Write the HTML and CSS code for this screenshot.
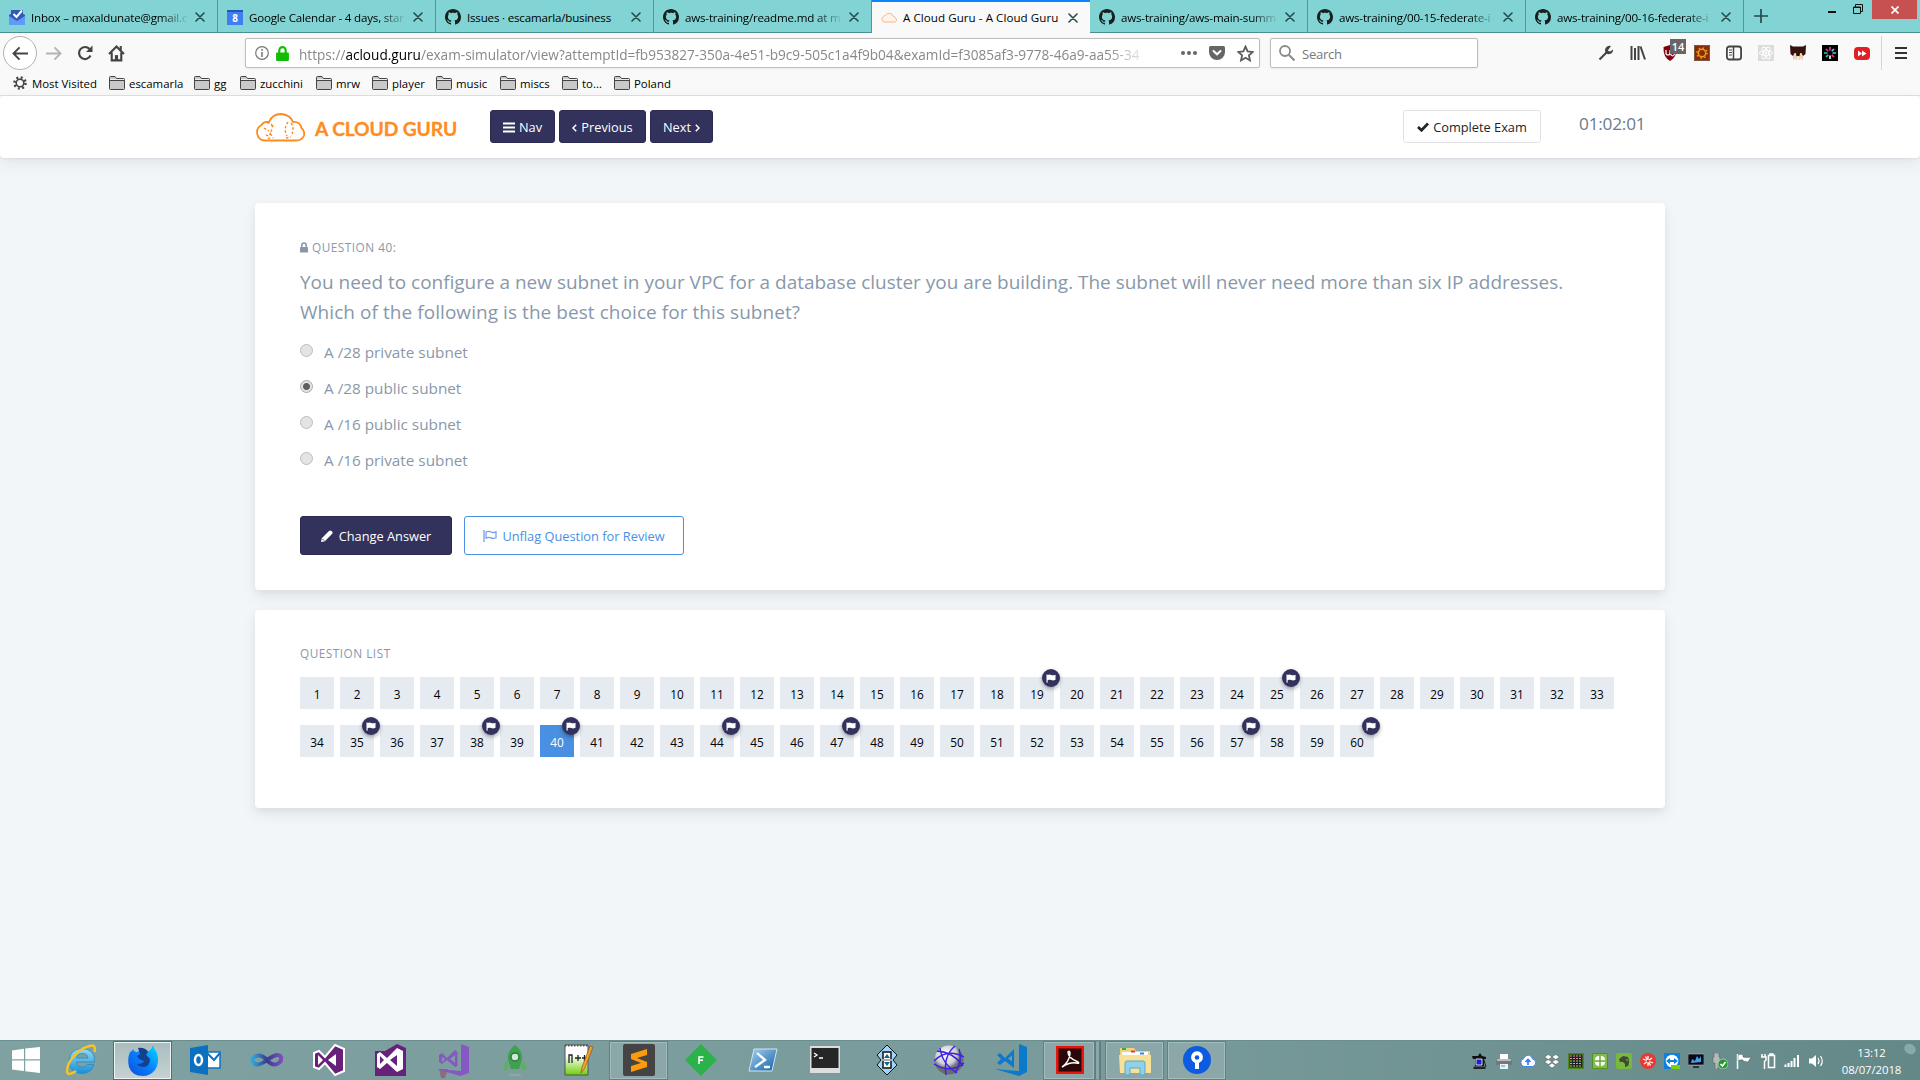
FILE: index.html
```html
<!DOCTYPE html>
<html lang="en">
<head>
<meta charset="utf-8">
<title>A Cloud Guru - A Cloud Guru</title>
<link rel="stylesheet" href="styles.css">
</head>
<body>
<svg class="defs" width="0" height="0">
  <defs>
    <symbol id="github" viewBox="0 0 16 16"><path fill="#15201f" d="M8 0C3.58 0 0 3.58 0 8c0 3.54 2.29 6.53 5.47 7.59.4.07.55-.17.55-.38 0-.19-.01-.82-.01-1.49-2.01.37-2.53-.49-2.69-.94-.09-.23-.48-.94-.82-1.13-.28-.15-.68-.52-.01-.53.63-.01 1.08.58 1.23.82.72 1.21 1.87.87 2.33.66.07-.52.28-.87.51-1.07-1.78-.2-3.64-.89-3.64-3.95 0-.87.31-1.59.82-2.15-.08-.2-.36-1.02.08-2.12 0 0 .67-.21 2.2.82.64-.18 1.32-.27 2-.27.68 0 1.36.09 2 .27 1.53-1.04 2.2-.82 2.2-.82.44 1.1.16 1.92.08 2.12.51.56.82 1.27.82 2.15 0 3.07-1.87 3.75-3.65 3.95.29.25.54.73.54 1.48 0 1.07-.01 1.93-.01 2.2 0 .21.15.46.55.38A8.013 8.013 0 0016 8c0-4.42-3.58-8-8-8z"/></symbol>
    <symbol id="close" viewBox="0 0 10 10"><path d="M1 1l8 8M9 1l-8 8" stroke="#234b4b" stroke-width="1.6" stroke-linecap="round"/></symbol>
    <symbol id="folder" viewBox="0 0 16 14"><path d="M.5 12.500V1.500q0-1 1-1h4.500l1.500 2h7q1 0 1 1v9q0 1-1 1h-13q-1 0-1-1z" fill="#c9c9c9" stroke="#444"/><path d="M1 4.500h14" stroke="#444"/><path d="M1 3.500h14" stroke="#eee"/></symbol>
    <symbol id="flag" viewBox="0 0 10 10"><path fill="#fff" d="M.5 1.500h1v.500q2-1 3.800 0 1.700.800 4.200-.300v5q-2.300 1.200-4.200.400-1.900-.900-3.600 0V9.500h-1.200z"/></symbol>
    <linearGradient id="gIe" x2="0" y2="1"><stop stop-color="#8fdcfb"/><stop offset="1" stop-color="#1a8fd8"/></linearGradient>
    <linearGradient id="gFx" x1="1" x2="0" y2="1"><stop stop-color="#00e1ff"/><stop offset=".5" stop-color="#0a7fff"/><stop offset="1" stop-color="#0a4fd8"/></linearGradient>
    <linearGradient id="gInf" x2="1"><stop stop-color="#2fa8d8"/><stop offset=".5" stop-color="#3a3a90"/><stop offset="1" stop-color="#7a4fb8"/></linearGradient>
    <linearGradient id="gNpp" x2="0" y2="1"><stop offset=".35" stop-color="#fff"/><stop offset="1" stop-color="#6fce0a"/></linearGradient>
    <linearGradient id="gPs" x2="1" y2="1"><stop stop-color="#a8d0ee"/><stop offset="1" stop-color="#0f63a8"/></linearGradient>
    <radialGradient id="gBall" cx=".4" cy=".3"><stop stop-color="#fff"/><stop offset=".7" stop-color="#cfcfd4"/><stop offset="1" stop-color="#6a6a70"/></radialGradient>
  </defs>
</svg>

<header class="browser">
  <div class="tabs">
    <div class="tab"><svg class="fav" viewBox="0 0 16 16"><path d="M0 6l8-5 8 5v10H0z" fill="#2b59c9"/><path d="M2 1h12v9l-6 3-6-3z" fill="#3358b8"/><path d="M4.500 5l3 3L13 1.500" fill="none" stroke="#fff" stroke-width="2"/><path d="M0 7l8 5 8-5v9H0z" fill="#5f9cf8"/></svg><span class="title fade">Inbox – maxaldunate@gmail.c</span><svg class="x"><use href="#close"/></svg></div>
    <div class="tab"><svg class="fav" viewBox="0 0 16 16"><path d="M0 1h16v15H0z" fill="#3f7df0"/><path d="M0 1h16v2H0z" fill="#2456b8"/><text x="8" y="12.500" text-anchor="middle" font-size="10" font-weight="700" fill="#fff">8</text></svg><span class="title fade">Google Calendar - 4 days, star</span><svg class="x"><use href="#close"/></svg></div>
    <div class="tab"><svg class="fav"><use href="#github"/></svg><span class="title">Issues · escamarla/business</span><svg class="x"><use href="#close"/></svg></div>
    <div class="tab"><svg class="fav"><use href="#github"/></svg><span class="title fade">aws-training/readme.md at m</span><svg class="x"><use href="#close"/></svg></div>
    <div class="tab active"><svg class="fav" viewBox="0 -9 50 50"><path d="M10 28.500A9 9 0 0 1 7.500 12Q9 7.500 14 8.500 18 1 26 1.500q9 .500 11.500 8.500 6 0 7.500 6 4.500 3 3.500 7.500-1.500 5-7 5z" fill="#fff4ea" stroke="#ffb080" stroke-width="3"/></svg><span class="title">A Cloud Guru - A Cloud Guru</span><svg class="x"><use href="#close"/></svg></div>
    <div class="tab"><svg class="fav"><use href="#github"/></svg><span class="title fade">aws-training/aws-main-summ</span><svg class="x"><use href="#close"/></svg></div>
    <div class="tab"><svg class="fav"><use href="#github"/></svg><span class="title fade">aws-training/00-15-federate-i</span><svg class="x"><use href="#close"/></svg></div>
    <div class="tab"><svg class="fav"><use href="#github"/></svg><span class="title fade">aws-training/00-16-federate-i</span><svg class="x"><use href="#close"/></svg></div>
    <svg class="plus" viewBox="0 0 14 14"><path d="M7 0v14M0 7h14" stroke="#234b4b" stroke-width="1.700"/></svg>
    <div class="winbtns">
      <svg class="min" viewBox="0 0 8 2"><path d="M0 1h8" stroke="#111" stroke-width="2"/></svg>
      <svg class="rest" viewBox="0 0 10 10"><path d="M.5 3h7v6.500h-7zM.5 3.500h7M2.500 3V.5h7v7H8" fill="none" stroke="#111"/></svg>
      <div class="winclose"><svg viewBox="0 0 8 8"><path d="M.5.5l7 7M7.500.5l-7 7" stroke="#fff" stroke-width="1.700"/></svg></div>
    </div>
  </div>

  <div class="toolbar">
    <div class="back"><svg viewBox="0 0 18 16"><path d="M17 8H2M8 1.500L1.500 8 8 14.500" fill="none" stroke="#444" stroke-width="2"/></svg></div>
    <svg class="fwd" viewBox="0 0 18 16"><path d="M1 8h15M10 1.500L16.500 8 10 14.500" fill="none" stroke="#b4b4b4" stroke-width="2"/></svg>
    <svg class="reload" viewBox="0 0 16 16"><path d="M13.500 10.500A6 6 0 1 1 12.500 4" fill="none" stroke="#444" stroke-width="2.200"/><path d="M15.500.5v6.500H9z" fill="#444"/></svg>
    <svg class="home" viewBox="0 0 16 16"><path d="M1 8.500L8 1.500l7 7M3.500 7v7.500h9V7" fill="none" stroke="#444" stroke-width="2"/><path d="M6.500 15V9.500h3V15" fill="#444"/><path d="M11 1h2v4h-2z" fill="#444"/></svg>
    <div class="url">
      <svg class="info" viewBox="0 0 14 14"><circle cx="7" cy="7" r="6.300" fill="none" stroke="#777" stroke-width="1.200"/><path d="M7 6v5M7 3v1.700" stroke="#777" stroke-width="1.500"/></svg>
      <svg class="lock" viewBox="0 0 12 14"><path d="M3 7V4.200a3 3.200 0 0 1 6 0V7" fill="none" stroke="#12bc00" stroke-width="2"/><rect y="6" width="12" height="8" rx="1" fill="#12bc00"/></svg>
      <span class="addr">https://<b>acloud.guru</b>/exam-simulator/view?attemptId=fb953827-350a-4e51-b9c9-505c1a4f9b04&amp;examId=f3085af3-9778-46a9-aa55-34</span>
      <svg class="dots" viewBox="0 0 16 4"><circle cx="2" cy="2" r="2"/><circle cx="8" cy="2" r="2"/><circle cx="14" cy="2" r="2"/></svg>
      <svg class="pocket" viewBox="0 0 16 14"><path d="M1.500 0h13Q16 0 16 1.500V6a8 8 0 0 1-16 0V1.500Q0 0 1.500 0z" fill="#666"/><path d="M4.500 5L8 8.300 11.500 5" fill="none" stroke="#fff" stroke-width="2" stroke-linecap="round"/></svg>
      <svg class="star" viewBox="0 0 16 16"><path d="M8 1.500l2 4.500 4.800.500-3.600 3.200 1 4.800L8 12l-4.200 2.500 1-4.800L1.200 6.500 6 6z" fill="none" stroke="#5a5a5a" stroke-width="1.700"/></svg>
    </div>
    <div class="search"><svg viewBox="0 0 16 16"><circle cx="6" cy="6" r="5" fill="none" stroke="#888" stroke-width="1.800"/><path d="M10 10l5.500 5.500" stroke="#888" stroke-width="2"/></svg><span>Search</span></div>
    <div class="exts">
      <svg viewBox="0 0 16 16"><path d="M1.500 14.500L9 7" stroke="#444" stroke-width="2.200"/><path d="M13 1A4.500 4.500 0 0 0 7 5.500q.3 3.500 4 3.700 3.700-.2 4.300-4.700l-3.300 2L9.800 5.500z" fill="#444"/></svg>
      <svg viewBox="0 0 16 16"><path d="M1.500 1v14M5 3v12M8.500 1v14M10.500 1.500L15 14.500" stroke="#444" stroke-width="2"/></svg>
      <div class="ub"><svg viewBox="0 0 16 16"><path d="M8 0l6.500 2Q15 12 8 16 1 12 1.500 2z" fill="#800010"/><path d="M4 5v3q0 2 2 2t2-2V5M10.500 7.500a1.700 1.700 0 1 0 .1 0" fill="none" stroke="#fff" stroke-width="1.200"/></svg><span>14</span></div>
      <svg viewBox="0 0 16 16"><path d="M0 0h16v16H0z" fill="#8c2a08"/><path d="M.5.5h15v15H.5z" fill="none" stroke="#7c5a45"/><circle cx="8" cy="8" r="5" fill="none" stroke="#dfa017" stroke-width="1.800" stroke-dasharray="1.400 2.527"/><circle cx="8" cy="8" r="3.700" fill="none" stroke="#dfa017" stroke-width="1.500"/></svg>
      <svg viewBox="0 0 16 16"><rect x=".9" y="1.500" width="14.200" height="13" rx="2.500" fill="none" stroke="#444" stroke-width="1.800"/><path d="M7.500 2v12" stroke="#444" stroke-width="1.500"/><path d="M3 5h3M3 7.500h3M3 10h3" stroke="#444"/></svg>
      <svg viewBox="0 0 16 16"><path d="M0 0h16v16H0z" fill="#dcdcdc"/><g fill="none" stroke="#fff"><ellipse cx="8" cy="8" rx="6.500" ry="2.600"/><ellipse cx="8" cy="8" rx="6.500" ry="2.600" transform="rotate(60 8 8)"/><ellipse cx="8" cy="8" rx="6.500" ry="2.600" transform="rotate(120 8 8)"/></g><circle cx="8" cy="8" r="1.500" fill="#fff"/></svg>
      <svg viewBox="0 0 16 16"><path d="M3 8h10v7H3z" fill="#f0cfb0"/><path d="M0 0l3 1.500h10L16 0l-.5 9-2.500 2-1.500-3h-7L3 11 .5 9z" fill="#35120d"/><path d="M6 8h4l-.5 3h-3z" fill="#20100c"/><path d="M5 13.500v2.500M8 12v4M11 13.500v2.500" stroke="#f9f9f9" stroke-width="1.500"/></svg>
      <svg viewBox="0 0 16 16"><path d="M0 0h16v16H0z" fill="#000"/><g stroke-width="1.700"><path d="M8 2v3.500M4 4l2.200 2.200" stroke="#e8368f"/><path d="M12 4L9.800 6.200M14 8h-3.500" stroke="#57d5e0"/><path d="M12 12L9.800 9.800" stroke="#e8368f"/><path d="M8 14v-3.500" stroke="#eee"/><path d="M4 12l2.200-2.200M2 8h3.500" stroke="#35c5b8"/></g></svg>
      <svg viewBox="0 0 16 16"><rect y="2" width="16" height="13" rx="4" fill="#e01f27"/><path d="M4 5.500L8 8.500l-4 3zM8 5.500l4.500 3-4.500 3z" fill="#fff"/></svg>
    </div>
    <div class="sep"></div>
    <svg class="menu" viewBox="0 0 12 12"><path d="M0 1h12M0 6h12M0 11h12" stroke="#333" stroke-width="1.800"/></svg>
  </div>

  <nav class="bookmarks">
    <a class="most"><svg viewBox="0 0 14 14"><circle cx="7" cy="7" r="5.500" fill="none" stroke="#444" stroke-width="2.600" stroke-dasharray="1.900 2.420"/><circle cx="7" cy="7" r="3.800" fill="none" stroke="#444" stroke-width="1.600"/></svg>Most Visited</a>
    <a class="w2"><svg><use href="#folder"/></svg>escamarla</a>
    <a class="w3"><svg><use href="#folder"/></svg>gg</a>
    <a class="w4"><svg><use href="#folder"/></svg>zucchini</a>
    <a class="w5"><svg><use href="#folder"/></svg>mrw</a>
    <a class="w6"><svg><use href="#folder"/></svg>player</a>
    <a class="w6"><svg><use href="#folder"/></svg>music</a>
    <a class="w7"><svg><use href="#folder"/></svg>miscs</a>
    <a class="w8"><svg><use href="#folder"/></svg>to...</a>
    <a><svg><use href="#folder"/></svg>Poland</a>
  </nav>
</header>

<main class="page">
  <div class="appbar">
    <svg class="logo" viewBox="0 0 50 29"><path d="M9 27.500A8.300 8.300 0 0 1 6.500 12Q8.500 8 14 9 17.500 1 26 1q9 .500 12 8 7-.500 8.500 6 3.500 3 2.500 7.500-2 5-8 5z" fill="none" stroke="#ff8a1e" stroke-width="1.800"/><path d="M12 10q4-1 5 3M9 15l5 3M11 22l3 1 2-4M18 12l-2.500 9 3 4M33 9q-5 7-1 14M36 10q4 6 0 13M31 25l5-1M13 26l3-2" fill="none" stroke="#ff8a1e" stroke-width="1.400" stroke-dasharray="2.500 2"/></svg>
    <span class="brand">A CLOUD GURU</span>
    <div class="navbtns">
      <button class="btn dark nav"><svg viewBox="0 0 12 11"><path d="M0 1.500h12M0 5.500h12M0 9.500h12" stroke="#fff" stroke-width="2"/></svg>Nav</button>
      <button class="btn dark prev"><svg class="chev" viewBox="0 0 5 8"><path d="M4.200.7L1 4l3.200 3.300" fill="none" stroke="#fff" stroke-width="1.500"/></svg>Previous</button>
      <button class="btn dark next">Next<svg class="chev" viewBox="0 0 5 8"><path d="M.8.7L4 4 .8 7.300" fill="none" stroke="#fff" stroke-width="1.500"/></svg></button>
    </div>
    <button class="btn complete"><svg viewBox="0 0 12 10"><path d="M1 5l3.500 3.300L11 1.500" fill="none" stroke="#212529" stroke-width="2.700"/></svg>Complete Exam</button>
    <span class="timer">01:02:01</span>
  </div>

  <section class="card question">
    <h6><svg viewBox="0 0 8 11"><path d="M1.800 5V3.300a2.200 2.400 0 0 1 4.400 0V5" fill="none" stroke="#8898aa" stroke-width="1.500"/><rect y="5" width="8" height="5.500" rx=".7" fill="#8898aa"/></svg>QUESTION 40:</h6>
    <p class="text">You need to configure a new subnet in your VPC for a database cluster you are building. The subnet will never need more than six IP addresses.<br><span class="second">Which of the following is the best choice for this subnet?</span></p>
    <div class="opts">
      <label><i></i>A /28 private subnet</label>
      <label><i class="on"></i>A /28 public subnet</label>
      <label><i></i>A /16 public subnet</label>
      <label><i></i>A /16 private subnet</label>
    </div>
    <div class="actions">
      <button class="btn dark change"><svg viewBox="0 0 12 12"><path d="M0 12l.8-3.800L8 1q1.200-1.200 2.400 0l.6.6q1.200 1.200 0 2.400L3.800 11.200z" fill="#fff"/><path d="M1.500 9l1.500 1.500" stroke="#32325d"/></svg>Change Answer</button>
      <button class="btn outline"><svg viewBox="0 0 14 12"><path d="M1 0v12" stroke="#6c9df0" stroke-width="1.300"/><path d="M3 2q2.500-1.200 5 0t5-.3v6q-2.500 1.300-5 .2t-5 .2z" fill="none" stroke="#6c9df0" stroke-width="1.200"/></svg>Unflag Question for Review</button>
    </div>
  </section>

  <section class="card list">
    <h6>QUESTION LIST</h6>
    <div class="grid">
      <a>1</a><a>2</a><a>3</a><a>4</a><a>5</a><a>6</a><a>7</a><a>8</a><a>9</a><a>10</a><a>11</a><a>12</a><a>13</a><a>14</a><a>15</a><a>16</a><a>17</a><a>18</a><a>19<em><svg><use href="#flag"/></svg></em></a><a>20</a><a>21</a><a>22</a><a>23</a><a>24</a><a>25<em><svg><use href="#flag"/></svg></em></a><a>26</a><a>27</a><a>28</a><a>29</a><a>30</a><a>31</a><a>32</a><a>33</a>
      <a>34</a><a>35<em><svg><use href="#flag"/></svg></em></a><a>36</a><a>37</a><a>38<em><svg><use href="#flag"/></svg></em></a><a>39</a><a class="cur">40<em><svg><use href="#flag"/></svg></em></a><a>41</a><a>42</a><a>43</a><a>44<em><svg><use href="#flag"/></svg></em></a><a>45</a><a>46</a><a>47<em><svg><use href="#flag"/></svg></em></a><a>48</a><a>49</a><a>50</a><a>51</a><a>52</a><a>53</a><a>54</a><a>55</a><a>56</a><a>57<em><svg><use href="#flag"/></svg></em></a><a>58</a><a>59</a><a>60<em><svg><use href="#flag"/></svg></em></a>
    </div>
  </section>
</main>

<footer class="taskbar">
  <div class="start"><svg viewBox="0 0 28 26"><path d="M0 3.500L12 1.800V12.300H0zM13.200 1.600L28 0v12.300H13.200zM0 13.500h12V24L0 22.500zM13.200 13.500H28V26l-14.800-1.800z" fill="#fff"/></svg></div>
  <div class="apps">
    <div class="app"><svg viewBox="0 0 32 32"><path d="M29.500 18H11.500q.5 5 6 5 3.500 0 5-2.500h6.500Q26.500 29.500 17 29.500 4.500 29 4 17 4.500 5 17 4.500 30.500 5 29.500 18zM11.500 14h11.500q-.5-4.500-5.500-4.500-5 0-6 4.500z" fill="url(#gIe)" stroke="#2689c4" stroke-width=".8"/><path d="M29.500 8q2-8-5-6Q12 5 4 19q-4 10 0 11 3 0 7-3" fill="none" stroke="#f5c32c" stroke-width="2.500"/></svg></div>
    <div class="app focus"><svg viewBox="0 0 32 32"><path d="M3 8q2 0 3-3 1 3 4 3l4-2 8 1q3-2 4-6 1 4 4 8 3 10-2 17-5 6-12 6Q5 32 2 23 0 15 3 8z" fill="url(#gFx)"/><path d="M11 4q7-1 10 4l-2 3 4 4q0 7-6 8-5 0-7-3 6 0 7-3-5-1-7-5l3-2z" fill="#15408e"/></svg></div>
    <div class="app"><svg viewBox="0 0 32 32"><path d="M18 8h13v16H18z" fill="#fff" stroke="#0c73c3" stroke-width="1.500"/><path d="M18 9l7 7 6-7" fill="none" stroke="#0c73c3" stroke-width="2"/><path d="M1 4l18-3v30L1 28z" fill="#0c70c0"/><ellipse cx="9.500" cy="16" rx="3.500" ry="5" fill="none" stroke="#fff" stroke-width="2.500"/></svg></div>
    <div class="app"><svg viewBox="0 0 32 32"><path d="M16 16Q10 10 5 12t-3 6q3 6 14-2t14-3q1 5-4 7t-10-4z" fill="none" stroke="url(#gInf)" stroke-width="4"/></svg></div>
    <div class="app"><svg viewBox="0 0 32 32"><path d="M1 9l5-2 6 6L22 1l9 4v22l-9 4L12 19l-6 6-5-2z" fill="#68217a" stroke="#fff" stroke-width="2"/><path d="M5 11v10l5-5zM23 10v12l-8-6z" fill="#fff"/></svg></div>
    <div class="app"><svg viewBox="0 0 32 32"><path d="M0 7h10L22 0l9 4v28H0z" fill="#68217a"/><path d="M2 10l3-2 7 6L22 4l6 3v18l-6 3-10-9-7 6-3-2zM5 12v8l4-4zM22 11v11l-7-6z" fill="#fff" fill-rule="evenodd"/></svg></div>
    <div class="app"><svg viewBox="0 0 32 32"><path d="M2 25h9l-3 9H4z" fill="#8f6b80"/><path d="M24 0l8 3v26l-9 3L0 25l24 2z" fill="#8558c4"/><path d="M2 11l3-2 5 5 8-8 2.500 2v14l-2.500 1-8-7-5 4-3-2zM5 13v5l3-3zM18 11v8l-5-4z" fill="#8558c4" fill-rule="evenodd"/></svg></div>
    <div class="app"><svg viewBox="0 0 32 32"><path d="M8 16l-4 7 2 4 4-3zM24 16l4 7-2 4-4-3z" fill="#5fb060"/><path d="M16 1q8 6 7 15l-3 9h-8l-3-9Q8 7 16 1z" fill="#3fa050"/><circle cx="16" cy="13" r="4" fill="#cfe8d8" stroke="#2a7a3a" stroke-width="1.500"/><path d="M10 31h12" stroke="#aaa"/></svg></div>
    <div class="app"><svg viewBox="0 0 32 32"><path d="M4 1h23v30H4z" fill="url(#gNpp)" stroke="#555"/><path d="M4 1.500h23" stroke="#555" stroke-width="2" stroke-dasharray="1.500 1.500"/><path d="M8 19v-8h3v8M14 14h6M17 11v6M21 14h5M23.500 11v6" fill="none" stroke="#222" stroke-width="1.300"/><path d="M20 29l1-6L29 2l3 1-8 21z" fill="#f0a030" stroke="#8a4a10" stroke-width=".6"/></svg></div>
    <div class="app open"><svg viewBox="0 0 32 32"><rect width="32" height="32" rx="2" fill="#444"/><path d="M24 5v6L14 14l10 4v5L8 28v-6l10-3-10-4V10z" fill="#ff9a0d"/></svg></div>
    <div class="app"><svg viewBox="0 0 32 32"><path d="M16 0l16 16-16 16L0 16z" fill="#2bb24a"/><path d="M14 20v-7h4.500M14 16.300h4" fill="none" stroke="#fff" stroke-width="1.500"/></svg></div>
    <div class="app"><svg viewBox="0 0 32 32"><path d="M7 5h23l-5 22H2z" fill="url(#gPs)" stroke="#cfe4f2"/><path d="M10 9l8 7-10 7M17 23h6" fill="none" stroke="#fff" stroke-width="2.300"/></svg></div>
    <div class="app"><svg viewBox="0 0 32 32"><path d="M1 2h30v27H1z" fill="#ddd"/><path d="M2.500 4h27v20h-27z" fill="#262626"/><path d="M5 9l3 2-3 2M10 14h4" fill="none" stroke="#fff" stroke-width="1.300"/></svg></div>
    <div class="app"><svg viewBox="0 0 32 32"><path d="M16 1l10 10-4 5 4 5-10 10L6 21l4-5-4-5z" fill="#9fd4fb" stroke="#111"/><path d="M12 8h8v16h-8z" fill="#fff" stroke="#111" stroke-width="1.500"/><path d="M13 14l3-4 3 4zM13 18l3 4 3-4z" fill="#168"/><path d="M11 16h10" stroke="#aaa" stroke-width="2"/></svg></div>
    <div class="app"><svg viewBox="0 0 32 32"><circle cx="16" cy="16" r="14.500" fill="url(#gBall)"/><g fill="none" stroke="#3a20e0" stroke-width="1.400"><path d="M4 7Q20 8 30 22M7 4Q9 20 24 29M1 17Q14 4 31 13M22 2Q10 12 13 31M1 20Q18 30 31 19M26 5q4 12-4 24"/></g></svg></div>
    <div class="app"><svg viewBox="0 0 32 32"><path d="M24 0l8 3v25l-8 4L0 25l24 2z" fill="#0b7acc"/><path d="M2 11l3-2 5 5 9-9v19l-9-7-5 4-3-2 4-4zM13 14.500l4 3v-6z" fill="#0b7acc" fill-rule="evenodd"/></svg></div>
    <div class="app open stack"><svg viewBox="0 0 32 32"><path d="M2 2h28v28H2z" fill="#e8170c"/><path d="M4.500 4.500h23v23h-23z" fill="#2b0707"/><path d="M8 23q7-5 8-13 0-4-2-2 0 6 10 10 2 2-2 1-6-1-14 4z" fill="none" stroke="#fff" stroke-width="1.500"/></svg></div>
    <div class="app open"><svg viewBox="0 0 32 32"><path d="M1 4h14l2 3h14v22H1z" fill="#f0d279"/><path d="M3 8h26v5H3z" fill="#fff"/><path d="M0 11h32v18H1z" fill="#f7e199"/><path d="M3 5h4" stroke="#2fae55" stroke-width="2"/><path d="M12 7.500h4" stroke="#d8452f" stroke-width="2"/><path d="M21 9.500h4" stroke="#2f8ad8" stroke-width="2"/><path d="M6 31V19q0-2 2-2h16q2 0 2 2v12h-5v-7H11v7z" fill="#8fd0ea" stroke="#5da7c8"/></svg></div>
    <div class="app open"><svg viewBox="0 0 32 32"><circle cx="16" cy="16" r="14" fill="#0c5be0"/><path d="M14 25v-6a6 6 0 1 1 4 0v6z" fill="#fff"/><circle cx="16" cy="13.500" r="2.300" fill="#0c5be0"/></svg></div>
  </div>
  <div class="tray">
    <svg viewBox="0 0 16 16"><path d="M0 3h6l2-3 2 3 4 1v2H1zM3 6h9v7H3z" fill="#111"/><path d="M4 6h6v6H4z" fill="#1a22e0" stroke="#ddd"/><path d="M2 14h11v2H2zM12 7l2 7" fill="#222" stroke="#222"/></svg>
    <svg viewBox="0 0 16 16"><path d="M4 1h8v6H4z" fill="#fff"/><path d="M0 6h16v6H0z" fill="#777"/><path d="M1 6h14v2H1z" fill="#bbb"/><path d="M4 11h8v5H4z" fill="#eaf4ff"/><path d="M5 13h4" stroke="#39c"/></svg>
    <svg viewBox="0 0 16 16"><path d="M4 13.500a4 4 0 0 1-.5-7.700Q5 2 8.500 2.300 12 2.500 12.500 6a3.800 3.800 0 0 1 0 7.500z" fill="#fff" stroke="#4285f4"/><path d="M8 12V7M5.500 9L8 6.500 10.500 9" fill="none" stroke="#3b78e7" stroke-width="1.700"/></svg>
    <svg viewBox="0 0 16 16"><path d="M4.300 1.500L8 4 4.300 6.500.5 4zM11.700 1.500l3.800 2.500-3.800 2.500L8 4zM4.300 6.500L8 9l-3.700 2.500L.5 9zM11.700 6.500L15.500 9l-3.800 2.500L8 9zM4.500 12.500L8 10l3.500 2.500L8 15z" fill="#fff" stroke="#555" stroke-width=".5"/></svg>
    <svg viewBox="0 0 16 16"><path d="M0 0h16v16H0z" fill="#4d8a15"/><path d="M1.500 1.500h13v13h-13z" fill="#222"/><path d="M2 3h12M2 5.500h12" stroke="#d78fb0" stroke-dasharray="2 1"/><path d="M2 8h12M2 10.500h12M2 13h12" stroke="#a8c858" stroke-dasharray="2 1"/></svg>
    <svg viewBox="0 0 16 16"><path d="M.5.5h15v15H.5z" fill="#7fbd45" stroke="#569020"/><rect x="3" y="3" width="10" height="10" rx="4" fill="#fff"/><path d="M8 3v10M3 8h10" stroke="#68a832" stroke-width="1.500"/></svg>
    <svg viewBox="0 0 16 16"><rect width="16" height="16" rx="2" fill="#77b83d"/><path d="M3 6l4-3 5 1q2 5 0 9l-3 1v-3l-2-2-3 0z" fill="#3f4a3a"/><circle cx="11" cy="7" r=".8" fill="#9c6"/></svg>
    <svg viewBox="0 0 16 16"><circle cx="8" cy="8" r="8" fill="#e83a32"/><path d="M8 3v10M3 6l10 4M4 11l8-6M5.500 3.500l5 9" stroke="#fff" stroke-width="1.300"/><circle cx="8" cy="8" r="1.500" fill="#e83a32"/></svg>
    <svg viewBox="0 0 16 16"><path d="M0 0h16v16H0z" fill="#0c7fe0"/><circle cx="8" cy="8" r="6.300" fill="#fff"/><path d="M2 8l4-3v2h4V5l4 3-4 3V9H6v2z" fill="#0c7fe0"/><path d="M7 12h9v4H7z" fill="#76cf10"/></svg>
    <svg viewBox="0 0 16 16"><path d="M0 1h16v11H0z" fill="#070b18" stroke="#bbb" stroke-width=".6"/><path d="M3 10l1-4 3 2 2-5 2 3 2-3v6z" fill="#4a9be8"/><path d="M5 14h6" stroke="#333" stroke-width="2"/></svg>
    <svg viewBox="0 0 16 16"><path d="M2 0h5v4h1v6H6v6H3v-6H1V4h1z" fill="#b8b8b8" stroke="#666" stroke-width=".6"/><circle cx="11" cy="11" r="5" fill="#1f9a2e" stroke="#d8f0d8" stroke-width=".6"/><path d="M8.500 11l2 2 3-4" fill="none" stroke="#fff" stroke-width="1.600"/></svg>
    <svg viewBox="0 0 16 16"><path d="M1.500 1v15" stroke="#fff" stroke-width="1.500"/><path d="M2 2q3-1.500 5 0v2q3 1 8 0l-3 5-5-1V7q-2-1-5 1z" fill="#fff" stroke="#444" stroke-width=".4"/></svg>
    <svg viewBox="0 0 16 16"><path d="M8.500 2.500h6v12h-6zM10 2V1h3v1" fill="none" stroke="#fff" stroke-width="1.600"/><path d="M1 4h5v3L4.500 8.500V16M2 1v3M5 1v3" fill="none" stroke="#fff" stroke-width="1.500"/></svg>
    <svg viewBox="0 0 16 16"><path d="M1.500 14v-2.500M4.500 14v-4M7.500 14V8M10.500 14V5M14 14V2" stroke="#fff" stroke-width="2"/></svg>
    <svg viewBox="0 0 16 16"><path d="M1 5.500h3L8 2v12l-4-3.500H1z" fill="#fff"/><path d="M10 5q2 3 0 6M12.500 3q3.500 5 0 10" fill="none" stroke="#fff" stroke-width="1.200"/></svg>
  </div>
  <div class="clock">13:12<br>08/07/2018</div>
  <div class="peek"></div>
</footer>
</body>
</html>
```
FILE: styles.css
```css
* { box-sizing: border-box; }
body {
  margin: 0; width: 1920px; height: 1080px; overflow: hidden;
  display: flex; flex-direction: column;
  background: #f3f6f9; font-family: "Open Sans", "Noto Sans", sans-serif; color: #000;
}
svg { display: block; flex: none; }
.defs { position: absolute; }

/* browser chrome */
.browser { height: 96px; background: #f9f9f9; border-bottom: 1px solid #e1e1e2; flex: none; }
.tabs { height: 33px; display: flex; background: #81d4d3; box-shadow: inset 0 -1px #4c8f8e; }
.tab { width: 218px; height: 33px; flex: none; display: flex; align-items: center; padding: 1px 12px 0 9px; border-right: 1px solid #559695; font-size: 11.6px; }
.tab.active { background: #f9f9f9; border-right: 0; border-top: 2px solid #0a84ff; padding: 0 12px 0 9px; }
.fav { width: 16px; height: 16px; margin-right: 6px; }
.title { flex: 1; min-width: 0; white-space: nowrap; margin-right: 6px; letter-spacing: -.2px; }
.active .title { letter-spacing: .05px; }
.fade { overflow: hidden; -webkit-mask-image: linear-gradient(90deg, #000 82%, transparent 100%); mask-image: linear-gradient(90deg, #000 82%, transparent 100%); }
.x { width: 10px; height: 10px; }
.plus { width: 14px; height: 14px; margin: 9px 0 0 10px; }
.winbtns { margin-left: auto; display: flex; padding-right: 3px; }
.min { width: 8px; height: 2px; margin-top: 11px; }
.rest { width: 10px; height: 10px; margin: 4px 9px 0 17px; }
.winclose { width: 45px; height: 19px; background: #c75050; display: flex; align-items: center; justify-content: center; }
.winclose svg { width: 8px; height: 8px; }

.toolbar { height: 40px; display: flex; align-items: center; padding: 0 13px 0 3px; }
.back { width: 34px; height: 34px; border: 1px solid #b1b1b1; border-radius: 50%; background: #fff; display: flex; align-items: center; justify-content: center; }
.back svg { width: 17px; height: 15px; }
.fwd { width: 17px; height: 15px; margin-left: 8px; }
.reload { width: 16px; height: 16px; margin-left: 15px; }
.home { width: 17px; height: 17px; margin-left: 15px; }
.url, .search { height: 30px; background: #fff; border: 1px solid #bdbdbd; border-radius: 2px; box-shadow: 0 1px 3px rgba(0,0,0,.06); display: flex; align-items: center; }
.url { width: 1015px; margin-left: 120px; padding: 0 5px 0 9px; }
.info { width: 14px; height: 14px; }
.lock { width: 13px; height: 15px; margin: 0 10px 0 7px; }
.addr { width: 850px; padding-top: 2px; overflow: hidden; white-space: nowrap; font-size: 13.6px; color: #888; -webkit-mask-image: linear-gradient(90deg, #000 95%, transparent); mask-image: linear-gradient(90deg, #000 95%, transparent); }
.addr b { font-weight: 400; color: #000; }
.dots { width: 16px; height: 4px; fill: #666; margin-left: auto; }
.pocket { width: 16px; height: 14px; margin: 0 12px; }
.star { width: 17px; height: 17px; }
.search { width: 208px; margin-left: 10px; padding-left: 8px; font-size: 13.1px; letter-spacing: -.3px; color: #777; }
.search span { padding-top: 2px; }
.search svg { width: 16px; height: 16px; margin-right: 7px; }
.exts { margin-left: 120px; display: flex; gap: 16px; }
.exts svg { width: 16px; height: 16px; }
.ub { position: relative; }
.ub span { position: absolute; left: 8px; top: -6px; width: 16px; height: 15px; background: #666; color: #fff; font: 600 11px/15px "Open Sans", sans-serif; text-align: center; }
.sep { width: 1px; height: 34px; background: #d4d4d4; margin: 0 13px 0 11px; }
.menu { width: 12px; height: 12px; }

.bookmarks { height: 20px; display: flex; align-items: center; padding: 0 0 0 13px; font-size: 11.4px; }
.bookmarks a { display: flex; align-items: center; flex: none; white-space: nowrap; }
.bookmarks svg { width: 16px; height: 14px; margin-right: 4px; }
.bookmarks .most { width: 96px; }
.bookmarks .most svg { width: 14px; margin-right: 5px; }
.w2 { width: 85px; } .w3 { width: 46px; } .w4 { width: 76px; } .w5 { width: 56px; } .w6 { width: 64px; } .w7 { width: 62px; } .w8 { width: 52px; }

/* page */
.page { flex: 1; background: #f3f6f9; }
.appbar { height: 62px; background: #fff; border-radius: 4px; padding: 0 255px; display: flex; align-items: flex-start; box-shadow: 0 6px 16px rgba(50,50,93,.09), 0 1px 3px rgba(0,0,0,.07); }
.logo { width: 50px; height: 29px; margin-top: 17px; }
.brand { width: 175px; margin: 19px 0 0 10px; font: 700 19.3px/28px Lato, sans-serif; color: #ff8c22; white-space: nowrap; letter-spacing: -.15px; -webkit-text-stroke: .3px #ff8c22; }
.navbtns { display: flex; gap: 4px; margin-top: 14px; }
.btn { font: 500 12.8px "Open Sans", sans-serif; display: flex; align-items: center; justify-content: center; border-radius: 3px; padding: 1px 0 0; white-space: nowrap; height: 33px; border: 1px solid #e0e2e6; background: #fff; color: #212529; }
.btn.dark { background: #32325d; border-color: #2b2b52; color: #fff; }
.nav { width: 65px; } .prev { width: 87px; } .next { width: 63px; }
.nav svg { width: 12px; height: 11px; margin-right: 4px; }
.chev { width: 5px; height: 8px; margin: 1px 4px 0; }
.prev .chev { margin-left: 0; } .next .chev { margin-right: 0; }
.complete { width: 138px; margin: 14px 0 0 auto; }
.complete svg { width: 12px; height: 10px; margin-right: 4px; }
.timer { margin: 14px 0 0 38px; width: 86px; font-size: 17.2px; line-height: 28px; color: #6b7a8c; letter-spacing: -.2px; }

.card { width: 1410px; margin: 0 auto; background: #fff; border-radius: 4px; box-shadow: 0 7px 14px rgba(50,50,93,.08), 0 3px 8px rgba(0,0,0,.05); padding: 0 45px; }
.card h6 { margin: 0; display: flex; align-items: center; font-size: 11.800px; font-weight: 500; line-height: 17px; letter-spacing: .5px; color: #8898aa; }
.card h6 svg { width: 8px; height: 11px; margin-right: 4px; }
.question { margin-top: 45px; height: 387px; padding-top: 36px; }
.text { margin: 11px 0 0; font-size: 18.970px; line-height: 30px; color: #8898aa; white-space: nowrap; }
.second { letter-spacing: .08px; }
.opts { margin-top: 7px; }
.opts label { display: flex; align-items: center; height: 36px; font-size: 15.300px; color: #8898aa; }
.opts i { width: 13px; height: 13px; border: 1px solid #bdbdbd; border-radius: 50%; background: #e4e4e4; margin: -4px 11px 0 0; }
.opts .on { border-color: #aaa; background: radial-gradient(circle, #5f5f5f 3px, #e4e4e4 4px); }
.actions { display: flex; gap: 12px; margin-top: 38px; }
.actions .btn { height: 39px; }
.change { width: 152px; }
.change svg { width: 12px; height: 12px; margin-right: 6px; }
.actions .outline { width: 220px; color: #4a90e2; border-color: #4a90e2; }
.outline svg { width: 14px; height: 12px; margin-right: 5px; }

.list { margin-top: 20px; height: 198px; padding-top: 35px; }
.grid { display: grid; grid-template-columns: repeat(33, 34px); column-gap: 6px; row-gap: 16px; margin-top: 15px; }
.grid a { position: relative; height: 32px; line-height: 34px; background: #e6ebf2; text-align: center; font-size: 11.800px; font-weight: 500; color: #000; }
.grid .cur { background: #4a90e2; color: #fff; }
.grid em { position: absolute; left: 22px; top: -8px; width: 18px; height: 18px; border-radius: 50%; background: #32325d; box-shadow: 0 2px 4px rgba(0,0,0,.35); display: flex; align-items: center; justify-content: center; z-index: 1; }
.grid em svg { width: 10px; height: 10px; }

/* taskbar */
.taskbar { height: 40px; flex: none; display: flex; background: linear-gradient(90deg, #7fa1a2, #789a9b 60%, #648888); border-top: 1px solid #6b8f8f; }
.start { width: 51px; display: flex; align-items: center; justify-content: center; padding-bottom: 2px; }
.start svg { width: 28px; height: 26px; }
.apps { display: flex; gap: 3px; }
.app { width: 59px; height: 39px; display: flex; align-items: center; justify-content: center; padding-bottom: 1px; }
.app svg { width: 32px; height: 32px; overflow: visible; }
.focus { background: linear-gradient(#a9bdbe, #c6d2d4); border: 1px solid #566f70; box-shadow: inset 0 0 0 1px #edf2f2; }
.open { background: #8ba7a8; border: 1px solid #64807f; box-shadow: inset 0 0 0 1px #a3bcbc; }
.stack { width: 58px; border-right: 7px double #617f80; padding-left: 2px; margin-right: 1px; }
.tray { display: flex; gap: 8px; align-items: center; margin: 0 0 0 auto; }
.tray svg { width: 16px; height: 16px; }
.clock { width: 75px; margin-left: 10px; padding-top: 3px; text-align: center; color: #fff; font-size: 11.400px; line-height: 17px; letter-spacing: -.1px; }
.peek { width: 12px; height: 10px; border-radius: 50%; background: #84aaaa; margin: 3px 4px 0 -5px; transform: rotate(30deg); }
```
